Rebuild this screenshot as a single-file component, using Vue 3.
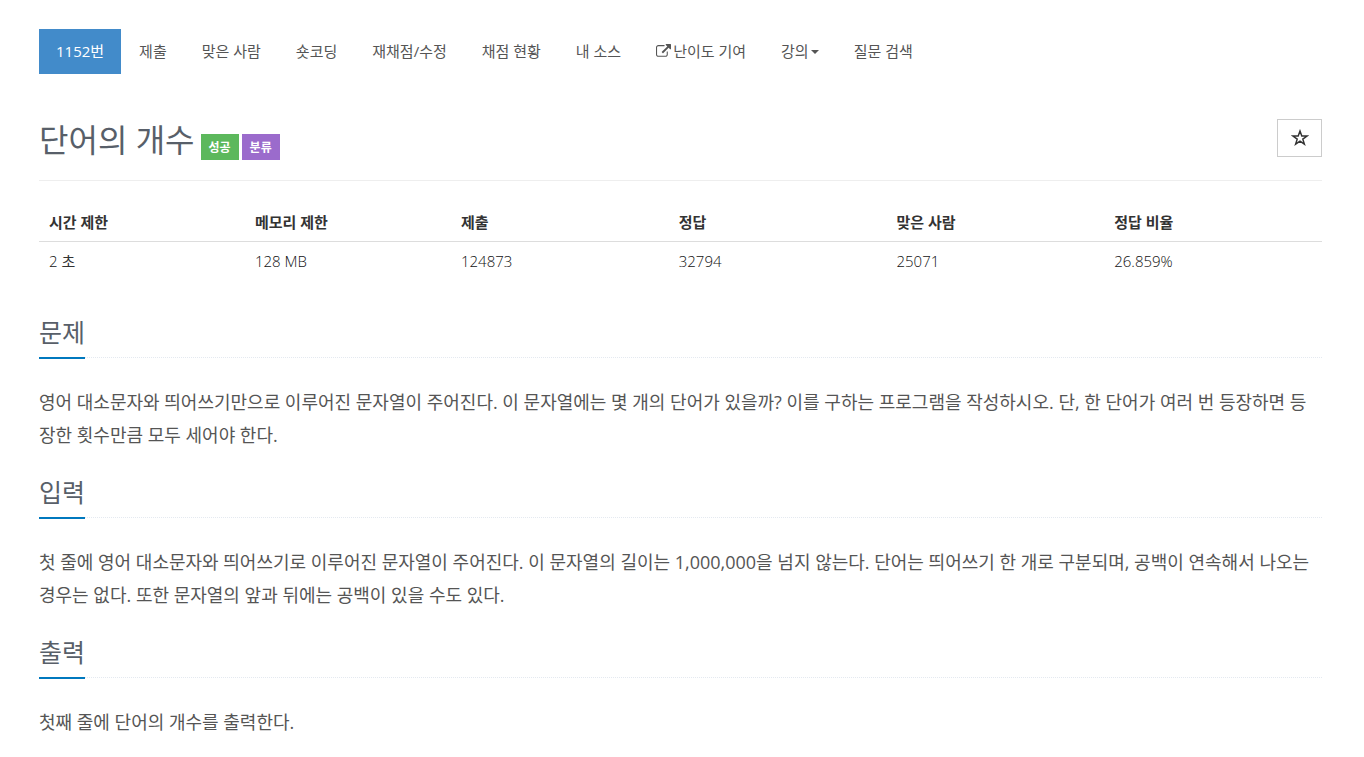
<template>
  <main class="container">
    <nav class="menu">
      <ul class="pills">
        <li v-for="item in menu" :key="item.label">
          <a href="#" class="pill" :class="{ active: item.active }">
            <svg v-if="item.external" class="icon-external" viewBox="0 0 1792 1792" aria-hidden="true">
              <path d="M1408 928v320q0 119-84.500 203.500t-203.500 84.500h-832q-119 0-203.500-84.500t-84.500-203.500v-832q0-119 84.500-203.500t203.500-84.500h704q14 0 23 9t9 23v64q0 14-9 23t-23 9h-704q-66 0-113 47t-47 113v832q0 66 47 113t113 47h832q66 0 113-47t47-113v-320q0-14 9-23t23-9h64q14 0 23 9t9 23zm384-864v512q0 26-19 45t-45 19-45-19l-176-176-652 652q-10 10-23 10t-23-10l-114-114q-10-10-10-23t10-23l652-652-176-176q-19-19-19-45t19-45 45-19h512q26 0 45 19t19 45z" />
            </svg>
            <span>{{ item.label }}</span>
            <span v-if="item.dropdown" class="caret"></span>
          </a>
        </li>
      </ul>
    </nav>

    <header class="page-header">
      <h1 class="title">단어의 개수</h1>
      <span class="label label-success">성공</span>
      <span class="label label-tag">분류</span>
      <button type="button" class="favorite" aria-label="즐겨찾기">
        <svg class="icon-star" viewBox="0 0 16 16" aria-hidden="true">
          <path d="M8 1.800L9.600 6.200H14.300L10.500 9L11.900 13.500L8 10.800L4.100 13.500L5.500 9L1.700 6.200H6.400Z" />
        </svg>
      </button>
    </header>

    <table class="info">
      <thead>
        <tr>
          <th v-for="col in info" :key="col.name" scope="col">{{ col.name }}</th>
        </tr>
      </thead>
      <tbody>
        <tr>
          <td v-for="col in info" :key="col.name">
            {{ col.value }}<template v-if="col.unit">&nbsp;<span class="unit">{{ col.unit }}</span></template>
          </td>
        </tr>
      </tbody>
    </table>

    <section v-for="section in sections" :key="section.title" class="section">
      <div class="headline">
        <h2>{{ section.title }}</h2>
      </div>
      <p>{{ section.text }}</p>
    </section>
  </main>
</template>

<script setup>
const menu = [
  { label: '1152번', active: true },
  { label: '제출' },
  { label: '맞은 사람' },
  { label: '숏코딩' },
  { label: '재채점/수정' },
  { label: '채점 현황' },
  { label: '내 소스' },
  { label: '난이도 기여', external: true },
  { label: '강의', dropdown: true },
  { label: '질문 검색' },
]

const info = [
  { name: '시간 제한', value: '2', unit: '초' },
  { name: '메모리 제한', value: '128 MB' },
  { name: '제출', value: '124873' },
  { name: '정답', value: '32794' },
  { name: '맞은 사람', value: '25071' },
  { name: '정답 비율', value: '26.859%' },
]

const sections = [
  {
    title: '문제',
    text: '영어 대소문자와 띄어쓰기만으로 이루어진 문자열이 주어진다. 이 문자열에는 몇 개의 단어가 있을까? 이를 구하는 프로그램을 작성하시오. 단, 한 단어가 여러 번 등장하면 등장한 횟수만큼 모두 세어야 한다.',
  },
  {
    title: '입력',
    text: '첫 줄에 영어 대소문자와 띄어쓰기로 이루어진 문자열이 주어진다. 이 문자열의 길이는 1,000,000을 넘지 않는다. 단어는 띄어쓰기 한 개로 구분되며, 공백이 연속해서 나오는 경우는 없다. 또한 문자열의 앞과 뒤에는 공백이 있을 수도 있다.',
  },
  {
    title: '출력',
    text: '첫째 줄에 단어의 개수를 출력한다.',
  },
]
</script>

<style>
body {
  margin: 0;
  background: #fff;
}
</style>

<style scoped>
.container {
  padding: 29px 42px 0 39px;
  color: #333;
  font-family: 'Open Sans', 'Noto Sans CJK KR', sans-serif;
  font-size: 15px;
  line-height: 21px;
}
.pills {
  display: flex;
  gap: 1px;
  margin: 0;
  padding: 0;
  list-style: none;
}
.pill {
  display: flex;
  align-items: center;
  padding: 12px 17px;
  color: #555;
  text-decoration: none;
  white-space: nowrap;
}
.pill.active {
  background: #428bca;
  color: #fff;
}
.icon-external {
  width: 15px;
  height: 15px;
  margin-right: 2px;
  fill: currentColor;
}
.caret {
  margin-left: 2px;
  border-top: 4px solid;
  border-right: 4px solid transparent;
  border-left: 4px solid transparent;
}
.page-header {
  display: flex;
  align-items: flex-end;
  gap: 3px;
  margin-top: 45px;
  padding-bottom: 20px;
  border-bottom: 1px solid #eee;
}
.title {
  margin: 0 3px 0 0;
  color: #585f69;
  font-size: 32px;
  font-weight: 400;
  line-height: 41px;
}
.label {
  padding: 4px 8px 2px;
  color: #fff;
  font-size: 12px;
  font-weight: 700;
  line-height: 20px;
}
.label-success {
  background: #5cb85c;
}
.label-tag {
  background: #9b6bcc;
}
.favorite {
  display: flex;
  align-items: center;
  justify-content: center;
  align-self: flex-start;
  width: 45px;
  height: 38px;
  margin-left: auto;
  padding: 0;
  border: 1px solid #ccc;
  background: #fff;
  color: #333;
}
.icon-star {
  width: 18px;
  height: 18px;
  fill: none;
  stroke: currentColor;
  stroke-width: 1.3;
}
.info {
  width: 100%;
  margin-top: 23px;
  border-collapse: collapse;
  table-layout: fixed;
  text-align: left;
}
.info th,
.info td {
  padding: 8px 10px;
}
.info th {
  width: 17%;
  border-bottom: 1px solid #ddd;
  font-weight: 700;
}
.info th:nth-child(-n + 2) {
  width: 16%;
}
.info td {
  padding-top: 9px;
  color: #111;
  font-weight: 300;
}
.info .unit {
  color: #333;
  font-weight: 400;
}
.headline {
  margin-bottom: 28px;
  border-bottom: 1px dotted #e4e9f0;
}
.section {
  margin-top: 24px;
}
.info + .section {
  margin-top: 36px;
}
.headline h2 {
  display: inline-block;
  margin: 0 0 -2px;
  padding-bottom: 8px;
  border-bottom: 2px solid #0078be;
  color: #585f69;
  font-size: 25px;
  font-weight: 400;
  line-height: 33px;
  vertical-align: top;
}
.section p {
  margin: 0;
  color: #555;
  font-size: 18px;
  line-height: 33px;
}
</style>
